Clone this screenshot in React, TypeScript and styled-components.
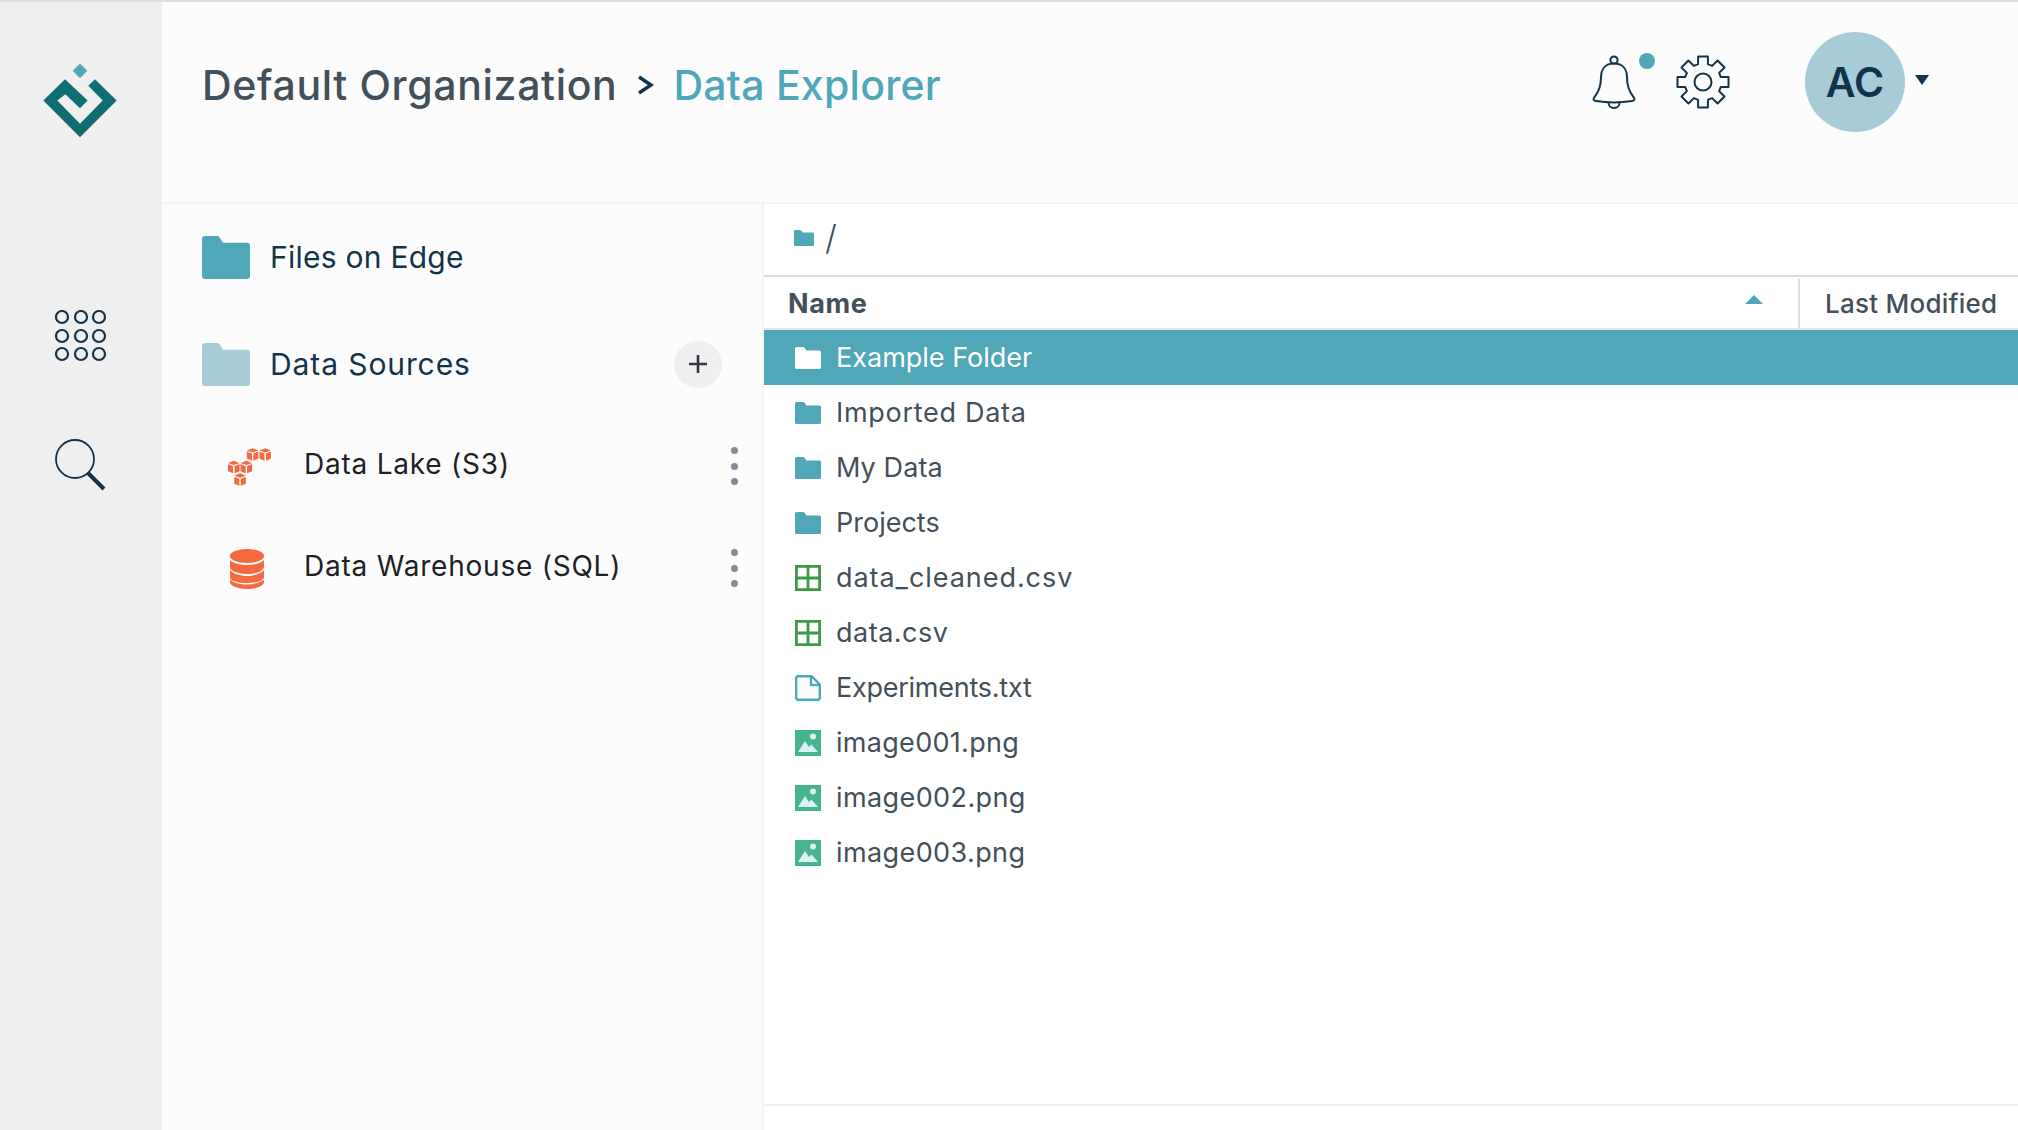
import styled, { createGlobalStyle } from 'styled-components';

const TEAL = '#4fa7b8';
const LIGHT_TEAL = '#a5ccd7';
const NAVY = '#12344a';
const SLATE = '#434f59';
const ORANGE = '#f4693d';

const GlobalStyle = createGlobalStyle`
  html, body {
    margin: 0;
    padding: 0;
    height: 100%;
    background: #fff;
    font-family: Inter, "Noto Sans", sans-serif;
    overflow: hidden;
  }
  #root { height: 100%; }
`;

const Shell = styled.div`
  display: grid;
  grid-template-columns: 162px 1fr;
  height: 1130px;
  border-top: 2px solid #dcdcdc;
  box-sizing: border-box;
`;

const Rail = styled.nav`
  background: #efefef;
  display: flex;
  flex-direction: column;
  align-items: center;
  padding-top: 61px;
`;

const LogoWrap = styled.div`
  display: flex;
  margin-right: 2px;
`;

const RailButton = styled.div<{ $top: number }>`
  display: flex;
  margin-top: ${(p) => p.$top}px;
`;

const Main = styled.div`
  display: flex;
  flex-direction: column;
  min-width: 0;
`;

const Header = styled.header`
  height: 202px;
  box-sizing: border-box;
  background: #fcfcfc;
  border-bottom: 2px solid #f4f4f4;
  display: flex;
  align-items: flex-start;
  padding: 0 40px;
`;

const Crumbs = styled.div`
  display: flex;
  align-items: center;
  height: 165px;
  font-size: 41px;
  font-weight: 500;
`;

const CrumbRoot = styled.span`
  color: ${SLATE};
  letter-spacing: 0.65px;
`;

const CrumbSep = styled.span`
  display: flex;
  margin: 0 18px 0 20px;
`;

const CrumbCurrent = styled.span`
  color: ${TEAL};
  letter-spacing: 0.25px;
`;

const Actions = styled.div`
  margin-left: auto;
  display: flex;
  align-items: flex-start;
  padding-top: 30px;
  margin-right: 49px;
`;

const BellWrap = styled.div`
  position: relative;
  display: flex;
  margin-top: 23px;
  margin-left: -1px;
`;

const BellDot = styled.span`
  position: absolute;
  top: -2px;
  right: -18px;
  width: 16px;
  height: 16px;
  border-radius: 50%;
  background: ${TEAL};
`;

const GearWrap = styled.div`
  display: flex;
  margin: 23px 0 0 39px;
`;

const Avatar = styled.div`
  width: 100px;
  height: 100px;
  border-radius: 50%;
  background: ${LIGHT_TEAL};
  color: ${NAVY};
  display: flex;
  align-items: center;
  justify-content: center;
  font-size: 41px;
  font-weight: 600;
  margin-left: 75px;
`;

const Caret = styled.span`
  width: 0;
  height: 0;
  margin: 43px 0 0 10px;
  border-left: 7.5px solid transparent;
  border-right: 7.5px solid transparent;
  border-top: 10px solid ${NAVY};
`;

const Body = styled.div`
  flex: 1;
  display: grid;
  grid-template-columns: 602px 1fr;
  min-height: 0;
`;

const Sidebar = styled.aside`
  background: #fcfcfc;
  border-right: 2px solid #f4f4f4;
  padding-top: 1px;
`;

const SourceRow = styled.div<{ $height: number }>`
  display: flex;
  align-items: center;
  height: ${(p) => p.$height}px;
  padding-left: 40px;
  padding-right: 40px;
  font-size: 30px;
  color: ${NAVY};
`;

const SourceLabel = styled.span<{ $tracking: number }>`
  margin-left: 20px;
  letter-spacing: ${(p) => p.$tracking}px;
`;

const AddButton = styled.button`
  margin-left: auto;
  width: 48px;
  height: 47px;
  border: 0;
  border-radius: 50%;
  background: #efeff1;
  display: flex;
  align-items: center;
  justify-content: center;
  padding: 0;
`;

const Connection = styled.div<{ $height: number }>`
  display: flex;
  align-items: center;
  height: ${(p) => p.$height}px;
  padding-left: 66px;
  font-size: 28px;
  color: #1d2126;
`;

const ConnectionIcon = styled.span`
  width: 44px;
  display: flex;
  justify-content: flex-start;
  padding-top: 5px;
`;

const ConnectionLabel = styled.span`
  margin-left: 32px;
  letter-spacing: 0.78px;
`;

const Kebab = styled.span`
  margin-left: auto;
  margin-right: 24px;
  margin-top: 4px;
  display: flex;
  flex-direction: column;
  gap: 8.5px;
`;

const KebabDot = styled.i`
  display: block;
  width: 7px;
  height: 7px;
  border-radius: 50%;
  background: #848b98;
`;

const Explorer = styled.section`
  display: flex;
  flex-direction: column;
  padding-bottom: 24px;
  min-width: 0;
  background: #fff;
`;

const PathBar = styled.div`
  height: 73px;
  box-sizing: border-box;
  border-bottom: 2px solid #dddddd;
  display: flex;
  align-items: center;
  padding-left: 30px;
  padding-bottom: 4px;
  color: ${SLATE};
  font-size: 34px;
`;

const PathSlash = styled.span`
  margin-left: 11px;
  font-weight: 300;
`;

const Listing = styled.div`
  flex: 1;
  border-bottom: 2px solid #efefef;
`;

const ColumnRow = styled.div`
  display: flex;
  height: 53px;
  box-sizing: border-box;
  padding-top: 2px;
  border-bottom: 2px solid #e4e4e4;
  color: ${SLATE};
  font-size: 26px;
`;

const NameColumn = styled.div`
  width: 1034px;
  flex: none;
  box-sizing: border-box;
  padding: 0 35px 0 24px;
  display: flex;
  align-items: center;
  justify-content: space-between;
  font-size: 27px;
  font-weight: 700;
  letter-spacing: 0.6px;
`;

const SortArrow = styled.span`
  width: 0;
  height: 0;
  border-left: 9px solid transparent;
  border-right: 9px solid transparent;
  border-bottom: 9px solid ${TEAL};
  margin-bottom: 8px;
`;

const ModifiedColumn = styled.div`
  border-left: 2px solid #dddddd;
  padding-left: 25px;
  display: flex;
  align-items: center;
  font-weight: 500;
  letter-spacing: 0.25px;
  white-space: nowrap;
`;

const FileRow = styled.div<{ $selected?: boolean }>`
  display: flex;
  align-items: center;
  height: 55px;
  padding-left: 31px;
  font-size: 27px;
  background: ${(p) => (p.$selected ? TEAL : 'transparent')};
  color: ${(p) => (p.$selected ? '#fff' : SLATE)};
`;

const FileIconSlot = styled.span`
  display: flex;
  width: 26px;
  flex: none;
`;

const FileName = styled.span<{ $tracking: number }>`
  margin-left: 15px;
  letter-spacing: ${(p) => p.$tracking}px;
`;

function FolderIcon({ width, height, color }: { width: number; height: number; color: string }) {
  return (
    <svg width={width} height={height} viewBox="0 0 48 44" preserveAspectRatio="none">
      <path
        d="M0 3a3 3 0 0 1 3-3h12a3 3 0 0 1 2.600 1.500L21 7h24a3 3 0 0 1 3 3v31a3 3 0 0 1-3 3H3a3 3 0 0 1-3-3z"
        fill={color}
      />
    </svg>
  );
}

function Logo() {
  return (
    <svg width="80" height="77" viewBox="60 40 240 230">
      <path d="M180 41l22 22-22 22-22-22z" fill={TEAL} />
      <path
        d="M70 152L135 88L203 152L180 175L136 133L112 152L180 222L248 152L205 108L225 88L290 152L180 262Z"
        fill="#0f6e74"
      />
    </svg>
  );
}

function AppsIcon() {
  const spots = [7, 26, 44];
  return (
    <svg width="52" height="52" viewBox="0 0 52 52" fill="none" stroke={NAVY} strokeWidth="2.2">
      {spots.map((y) => spots.map((x) => <circle key={`${x}-${y}`} cx={x} cy={y} r="6" />))}
    </svg>
  );
}

function SearchIcon() {
  return (
    <svg width="52" height="52" viewBox="0 0 52 52" fill="none" stroke={NAVY}>
      <circle cx="20" cy="20" r="19" strokeWidth="1.8" />
      <path d="M33 34l16 16" strokeWidth="4" />
    </svg>
  );
}

function BellIcon() {
  return (
    <svg width="46" height="54" viewBox="0 0 46 54" fill="none" stroke={NAVY} strokeWidth="2">
      <circle cx="23" cy="5" r="3.6" />
      <path d="M23 8.600c-9 0-13 6-13 14 0 9-2 14-6.500 19.500C2 44 2 45.500 5 46c11 1.700 25 1.700 36 0 3-.5 3-2 1.500-3.900C38 36.500 36 31.500 36 22.600c0-8-4-14-13-14z" />
      <path d="M17.500 47.500c0 3.400 2.400 5.500 5.500 5.500s5.500-2.100 5.500-5.500" />
    </svg>
  );
}

function gearPath() {
  const teeth = 8;
  const pts: string[] = [];
  for (let i = 0; i < teeth; i++) {
    const base = (i / teeth) * Math.PI * 2 - Math.PI / 2;
    const spans: [number, number][] = [
      [-0.27, 18.5],
      [-0.19, 26],
      [0.19, 26],
      [0.27, 18.5],
    ];
    spans.forEach(([off, r]) => {
      pts.push(`${(27 + Math.cos(base + off) * r).toFixed(2)} ${(27 + Math.sin(base + off) * r).toFixed(2)}`);
    });
  }
  return `M${pts.join('L')}Z`;
}

function GearIcon() {
  return (
    <svg width="54" height="54" viewBox="0 0 54 54" fill="none" stroke={NAVY} strokeWidth="2" strokeLinejoin="round">
      <path d={gearPath()} />
      <circle cx="27" cy="27" r="8.500" />
    </svg>
  );
}

function ChevronIcon() {
  return (
    <svg width="18" height="20" viewBox="0 0 18 20" fill="none" stroke={NAVY} strokeWidth="3.4">
      <path d="M2 2l12 8-12 8" />
    </svg>
  );
}

function PlusIcon() {
  return (
    <svg width="18" height="18" viewBox="0 0 18 18" stroke="#33383f" strokeWidth="2.600">
      <path d="M0 9h18M9 0v18" />
    </svg>
  );
}

function Cube({ x, y }: { x: number; y: number }) {
  return (
    <g transform={`translate(${x} ${y})`} fill={ORANGE}>
      <path d="M5.500 0L11 2.200 5.500 4.200 0 2.200z" />
      <path d="M0 3.200l4.800 1.900V12L0 10z" />
      <path d="M11 3.200L6.200 5.100V12L11 10z" />
    </g>
  );
}

function BucketsIcon() {
  return (
    <svg width="44" height="38" viewBox="0 0 42 36">
      <Cube x={18} y={0} />
      <Cube x={30} y={0} />
      <Cube x={0} y={12} />
      <Cube x={12} y={12} />
      <Cube x={6} y={24} />
    </svg>
  );
}

function DatabaseIcon() {
  return (
    <svg width="36" height="40" viewBox="-2 0 36 40" fill={ORANGE}>
      <ellipse cx="17" cy="7" rx="17" ry="7" />
      <path d="M0 11c3 3.500 10 5 17 5s14-1.500 17-5v7c0 4-8 7-17 7S0 22 0 18z" />
      <path d="M0 21c3 3.500 10 6 17 6s14-2.500 17-6v7c0 4-8 6-17 6S0 32 0 28z" />
      <path d="M0 30.500c3 3 10 5 17 5s14-2 17-5V33c0 4-8 7-17 7S0 37 0 33z" />
    </svg>
  );
}

function SheetIcon() {
  return (
    <svg width="26" height="26" viewBox="0 0 26 26" fill="none" stroke="#3d9a44" strokeWidth="2.800">
      <path d="M1.400 1.400h23.200v23.200H1.400zM13 1.400v23.200M1.400 13h23.200" />
    </svg>
  );
}

function TextFileIcon() {
  return (
    <svg width="26" height="26" viewBox="0 0 26 26" fill="none" stroke={TEAL} strokeWidth="2.400" strokeLinejoin="round">
      <path d="M1.200 3a1.800 1.800 0 0 1 1.800-1.800h13.500l8.300 8.300V23a1.800 1.800 0 0 1-1.800 1.800H3A1.800 1.800 0 0 1 1.200 23z" />
      <path d="M16 1.200v8.800h8.800" />
    </svg>
  );
}

function PictureIcon() {
  return (
    <svg width="26" height="26" viewBox="0 0 26 26">
      <rect width="26" height="26" fill="#45b48f" />
      <circle cx="18" cy="6.500" r="3" fill="#dcf1f4" />
      <path d="M3 22l7-11 4 6 2.500-2.500L23 22z" fill="#dcf1f4" />
    </svg>
  );
}

type FileKind = 'folder' | 'sheet' | 'text' | 'image';

const files: { name: string; kind: FileKind; tracking: number; selected?: boolean }[] = [
  { name: 'Example Folder', kind: 'folder', tracking: 0, selected: true },
  { name: 'Imported Data', kind: 'folder', tracking: 0.7 },
  { name: 'My Data', kind: 'folder', tracking: 0.1 },
  { name: 'Projects', kind: 'folder', tracking: 0 },
  { name: 'data_cleaned.csv', kind: 'sheet', tracking: 0.95 },
  { name: 'data.csv', kind: 'sheet', tracking: 0.5 },
  { name: 'Experiments.txt', kind: 'text', tracking: -0.25 },
  { name: 'image001.png', kind: 'image', tracking: 0.3 },
  { name: 'image002.png', kind: 'image', tracking: 0.4 },
  { name: 'image003.png', kind: 'image', tracking: 0.4 },
];

function FileIcon({ kind, selected }: { kind: FileKind; selected?: boolean }) {
  if (kind === 'sheet') return <SheetIcon />;
  if (kind === 'text') return <TextFileIcon />;
  if (kind === 'image') return <PictureIcon />;
  return <FolderIcon width={27} height={22} color={selected ? '#fff' : TEAL} />;
}

const KebabMenu = () => (
  <Kebab>
    <KebabDot />
    <KebabDot />
    <KebabDot />
  </Kebab>
);

export default function App() {
  return (
    <>
      <GlobalStyle />
      <Shell>
        <Rail>
          <LogoWrap>
            <Logo />
          </LogoWrap>
          <RailButton $top={170}>
            <AppsIcon />
          </RailButton>
          <RailButton $top={77}>
            <SearchIcon />
          </RailButton>
        </Rail>
        <Main>
          <Header>
            <Crumbs>
              <CrumbRoot>Default Organization</CrumbRoot>
              <CrumbSep>
                <ChevronIcon />
              </CrumbSep>
              <CrumbCurrent>Data Explorer</CrumbCurrent>
            </Crumbs>
            <Actions>
              <BellWrap>
                <BellIcon />
                <BellDot />
              </BellWrap>
              <GearWrap>
                <GearIcon />
              </GearWrap>
              <Avatar>AC</Avatar>
              <Caret />
            </Actions>
          </Header>
          <Body>
            <Sidebar>
              <SourceRow $height={104}>
                <FolderIcon width={48} height={43} color={TEAL} />
                <SourceLabel $tracking={0.25}>Files on Edge</SourceLabel>
              </SourceRow>
              <SourceRow $height={110}>
                <FolderIcon width={48} height={43} color={LIGHT_TEAL} />
                <SourceLabel $tracking={0.9}>Data Sources</SourceLabel>
                <AddButton>
                  <PlusIcon />
                </AddButton>
              </SourceRow>
              <Connection $height={90}>
                <ConnectionIcon>
                  <BucketsIcon />
                </ConnectionIcon>
                <ConnectionLabel>Data Lake (S3)</ConnectionLabel>
                <KebabMenu />
              </Connection>
              <Connection $height={114}>
                <ConnectionIcon>
                  <DatabaseIcon />
                </ConnectionIcon>
                <ConnectionLabel>Data Warehouse (SQL)</ConnectionLabel>
                <KebabMenu />
              </Connection>
            </Sidebar>
            <Explorer>
              <PathBar>
                <FolderIcon width={20} height={16} color={TEAL} />
                <PathSlash>/</PathSlash>
              </PathBar>
              <Listing>
                <ColumnRow>
                  <NameColumn>
                    Name
                    <SortArrow />
                  </NameColumn>
                  <ModifiedColumn>Last Modified</ModifiedColumn>
                </ColumnRow>
                {files.map((file) => (
                  <FileRow key={file.name} $selected={file.selected}>
                    <FileIconSlot>
                      <FileIcon kind={file.kind} selected={file.selected} />
                    </FileIconSlot>
                    <FileName $tracking={file.tracking}>{file.name}</FileName>
                  </FileRow>
                ))}
              </Listing>
            </Explorer>
          </Body>
        </Main>
      </Shell>
    </>
  );
}
